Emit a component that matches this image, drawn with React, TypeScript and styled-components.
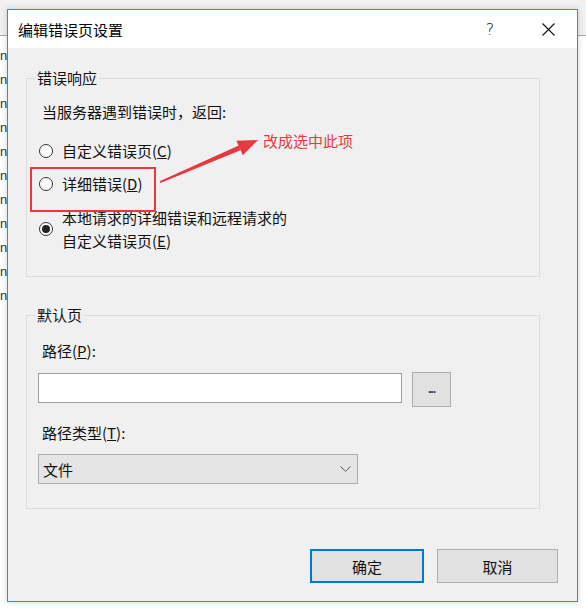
import React from "react";
import styled, { createGlobalStyle } from "styled-components";

const GlobalStyle = createGlobalStyle`
  html, body { margin: 0; padding: 0; }
  body {
    width: 586px;
    height: 608px;
    overflow: hidden;
    font-family: "Noto Sans CJK SC", "Microsoft YaHei", sans-serif;
    color: #111;
  }
`;

const Desktop = styled.div`
  position: relative;
  width: 586px;
  height: 608px;
  display: grid;
  grid-template-columns: 7px 571px 8px;
  background: linear-gradient(to bottom, #f1f1f1 0, #f1f1f1 35px, #a9a9a9 35px, #a9a9a9 36px, #ffffff 36px);
`;

const LeftStrip = styled.div`
  display: flex;
  flex-direction: column;
  padding-top: 44px;
  overflow: hidden;
`;

const StripItem = styled.div`
  height: 24px;
  line-height: 24px;
  font-size: 13px;
  font-family: "Liberation Sans", sans-serif;
  text-align: right;
  color: #333;
  padding-right: 1px;
`;

const Dialog = styled.div`
  margin-top: 9px;
  height: 593px;
  box-sizing: border-box;
  border: 1px solid #3a8ad0;
  background: #f0f0f0;
  display: flex;
  flex-direction: column;
  box-shadow: 0 0 6px rgba(0, 0, 0, 0.18);
`;

const TitleBar = styled.div`
  height: 38px;
  flex: none;
  background: #ffffff;
  display: flex;
  align-items: center;
  padding-left: 10px;
  font-size: 15px;
  color: #000;
`;

const TitleText = styled.div`
  flex: 1;
`;

const TitleButton = styled.div<{ $w: number }>`
  width: ${(p) => p.$w}px;
  height: 38px;
  display: flex;
  align-items: center;
  justify-content: center;
  font-size: 16px;
  font-family: "DejaVu Sans", sans-serif;
  font-weight: 300;
  color: #111;
`;

const Body = styled.div`
  flex: 1;
  display: flex;
  flex-direction: column;
  padding: 20px 38px 0 18px;
`;

const Group = styled.fieldset<{ $mt: number }>`
  margin: ${(p) => p.$mt}px 0 0 0;
  padding: 0;
  border: 1px solid #dcdcdc;
  min-width: 0;
  width: 514px;
  box-sizing: border-box;
`;

const Legend = styled.legend`
  margin-left: 8px;
  padding: 0 2px;
  font-size: 15px;
  line-height: 20px;
  color: #111;
`;

const GroupContent = styled.div<{ $pt: number; $pb: number }>`
  display: flex;
  flex-direction: column;
  align-items: flex-start;
  padding: ${(p) => p.$pt}px 0 ${(p) => p.$pb}px 11px;
`;

const Label = styled.div<{ $mt?: number }>`
  margin-top: ${(p) => p.$mt ?? 0}px;
  padding-left: 4px;
  font-size: 15px;
  line-height: 20px;
  color: #111;
`;

const RadioRow = styled.div<{ $mt: number }>`
  margin-top: ${(p) => p.$mt}px;
  display: flex;
  align-items: center;
  gap: 9px;
  padding-left: 1px;
`;

const RadioCircle = styled.span<{ $checked?: boolean }>`
  width: 14px;
  height: 14px;
  box-sizing: border-box;
  border: 1px solid #333;
  border-radius: 50%;
  background: #fff;
  display: flex;
  align-items: center;
  justify-content: center;
  flex: none;
  &::after {
    content: "";
    display: ${(p) => (p.$checked ? "block" : "none")};
    width: 8px;
    height: 8px;
    border-radius: 50%;
    background: #222;
  }
`;

const RadioLabel = styled.span<{ $lh?: number }>`
  font-size: 15px;
  line-height: ${(p) => p.$lh ?? 20}px;
  color: #111;
`;

const InputRow = styled.div<{ $mt: number }>`
  margin-top: ${(p) => p.$mt}px;
  display: flex;
  align-items: flex-start;
  gap: 10px;
`;

const TextBox = styled.div`
  width: 364px;
  height: 30px;
  box-sizing: border-box;
  border: 1px solid #9c9c9c;
  background: #fff;
`;

const BrowseButton = styled.div`
  margin-top: -1px;
  width: 39px;
  height: 35px;
  box-sizing: border-box;
  border: 1px solid #adadad;
  background: #e1e1e1;
  display: flex;
  align-items: center;
  justify-content: center;
  font-size: 12px;
  font-family: "Liberation Sans", sans-serif;
  font-weight: bold;
  color: #333;
  letter-spacing: -1px;
  padding-bottom: 2px;
`;

const Select = styled.div<{ $mt: number }>`
  margin-top: ${(p) => p.$mt}px;
  width: 320px;
  height: 30px;
  box-sizing: border-box;
  border: 1px solid #adadad;
  background: #e5e5e5;
  display: flex;
  align-items: center;
  justify-content: space-between;
  padding: 0 6px 0 4px;
  font-size: 15px;
  color: #111;
`;

const ButtonRow = styled.div`
  margin-top: 40px;
  margin-right: -19px;
  display: flex;
  justify-content: flex-end;
  gap: 13px;
`;

const DialogButton = styled.div<{ $primary?: boolean; $w: number }>`
  width: ${(p) => p.$w}px;
  height: 34px;
  box-sizing: border-box;
  border: ${(p) => (p.$primary ? "2px solid #0078d7" : "1px solid #adadad")};
  background: #e1e1e1;
  display: flex;
  align-items: center;
  justify-content: center;
  font-size: 15px;
  color: #111;
`;

const Callout = styled.div`
  position: absolute;
  left: 263px;
  top: 130px;
  font-size: 15px;
  line-height: 22px;
  color: #e33b3f;
`;

const HighlightBox = styled.div`
  position: absolute;
  left: 30px;
  top: 167px;
  width: 126px;
  height: 45px;
  box-sizing: border-box;
  border: 2px solid #e8383d;
`;

const ArrowSvg = styled.svg`
  position: absolute;
  left: 0;
  top: 0;
  pointer-events: none;
`;

export default function App() {
  const strip = Array.from({ length: 11 });
  return (
    <>
      <GlobalStyle />
      <Desktop>
        <LeftStrip>
          {strip.map((_, i) => (
            <StripItem key={i}>n</StripItem>
          ))}
        </LeftStrip>
        <Dialog>
          <TitleBar>
            <TitleText>编辑错误页设置</TitleText>
            <TitleButton $w={58}>?</TitleButton>
            <TitleButton $w={58}>
              <svg width="13" height="13" viewBox="0 0 13 13">
                <path d="M0.5 0.5 L12.5 12.5 M12.5 0.5 L0.5 12.5" stroke="#111" strokeWidth="1.1" fill="none" />
              </svg>
            </TitleButton>
          </TitleBar>
          <Body>
            <Group $mt={0}>
              <Legend>错误响应</Legend>
              <GroupContent $pt={14} $pb={24}>
                <Label>当服务器遇到错误时，返回:</Label>
                <RadioRow $mt={19}>
                  <RadioCircle />
                  <RadioLabel>
                    自定义错误页(<u>C</u>)
                  </RadioLabel>
                </RadioRow>
                <RadioRow $mt={13}>
                  <RadioCircle />
                  <RadioLabel>
                    详细错误(<u>D</u>)
                  </RadioLabel>
                </RadioRow>
                <RadioRow $mt={12}>
                  <RadioCircle $checked />
                  <RadioLabel $lh={23}>
                    本地请求的详细错误和远程请求的
                    <br />
                    自定义错误页(<u>E</u>)
                  </RadioLabel>
                </RadioRow>
              </GroupContent>
            </Group>
            <Group $mt={28}>
              <Legend>默认页</Legend>
              <GroupContent $pt={16} $pb={24}>
                <Label>
                  路径(<u>P</u>):
                </Label>
                <InputRow $mt={12}>
                  <TextBox />
                  <BrowseButton>...</BrowseButton>
                </InputRow>
                <Label $mt={16}>
                  路径类型(<u>T</u>):
                </Label>
                <Select $mt={11}>
                  <span>文件</span>
                  <svg width="11" height="6" viewBox="0 0 11 6">
                    <path d="M0.5 0.5 L5.5 5.3 L10.5 0.5" stroke="#555" strokeWidth="1" fill="none" />
                  </svg>
                </Select>
              </GroupContent>
            </Group>
            <ButtonRow>
              <DialogButton $primary $w={114}>确定</DialogButton>
              <DialogButton $w={121}>取消</DialogButton>
            </ButtonRow>
          </Body>
        </Dialog>
        <div />
        <HighlightBox />
        <ArrowSvg width="586" height="608" viewBox="0 0 586 608">
          <polygon
            points="159.6,181.3 160.4,183.1 240.4,150.2 238.8,145.6"
            fill="#e8383d"
          />
          <polygon points="258,140 236.4,140.8 242.8,155.2" fill="#e8383d" />
        </ArrowSvg>
        <Callout>改成选中此项</Callout>
      </Desktop>
    </>
  );
}
